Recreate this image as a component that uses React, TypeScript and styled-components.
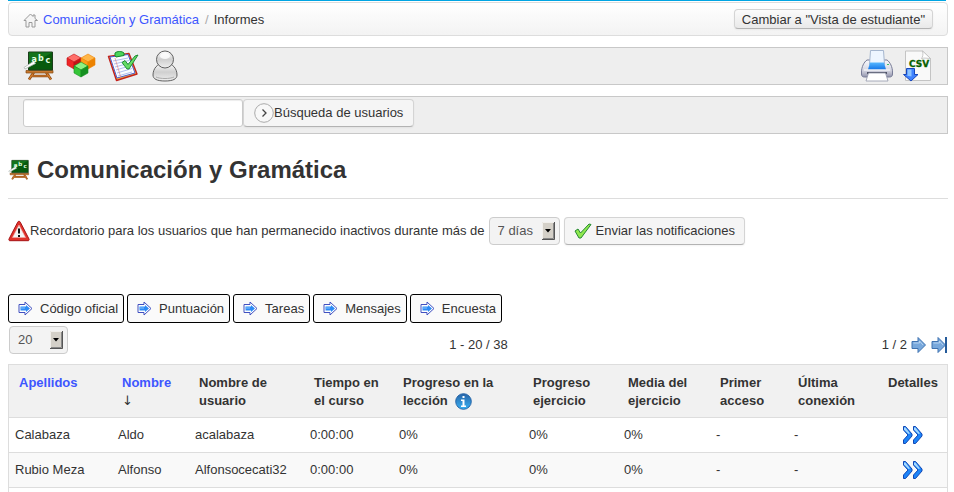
import React from "react";
import styled, { createGlobalStyle } from "styled-components";

const GlobalStyle = createGlobalStyle`
  * { box-sizing: border-box; }
  body {
    margin: 0;
    background: #fff;
    color: #333;
    font: 13px/18px "Liberation Sans", Arial, Helvetica, sans-serif;
  }
  button, input, select { font: inherit; color: inherit; margin: 0; }
  a { color: #3d56ff; text-decoration: none; }
  svg { display: block; flex: none; }
`;

const Page = styled.div`
  padding: 0 6px 0 8px;
`;

const Accent = styled.div`
  height: 1px;
  margin: 0 2px 1px 0;
  background: #00a5e3;
`;

const Breadcrumb = styled.nav`
  display: flex;
  align-items: center;
  justify-content: space-between;
  height: 34px;
  padding: 0 14px;
  border: 1px solid #ddd;
  border-radius: 4px;
  background: linear-gradient(#fff, #f3f3f3);
`;

const Trail = styled.ol`
  display: flex;
  align-items: center;
  gap: 6px;
  margin: 0;
  padding: 2px 0 0;
  list-style: none;
`;

const TrailItem = styled.li`
  display: flex;
  align-items: center;
  gap: 5px;
`;

const Slash = styled.span`
  color: #aaa;
`;

const Button = styled.button<{ $small?: boolean; $pad?: number; $gap?: number }>`
  display: inline-flex;
  align-items: center;
  gap: ${(p) => p.$gap ?? 0}px;
  height: ${(p) => (p.$small ? 20 : 28)}px;
  padding: ${(p) => (p.$small ? 1 : 0)}px ${(p) => p.$pad ?? 7}px 0;
  border: 1px solid #d4d4d4;
  border-bottom-color: #b3b3b3;
  border-radius: 4px;
  background: ${(p) => (p.$small ? "linear-gradient(#fbfbfb, #e9e9e9)" : "#f5f5f5")};
  box-shadow: 0 1px 2px rgba(0, 0, 0, 0.05);
  white-space: nowrap;
`;

const Toolbar = styled.div`
  display: flex;
  align-items: center;
  justify-content: space-between;
  height: 38px;
  margin-top: 11px;
  padding: 0 14px;
  border: 1px solid #c8c8c8;
  background: #eee;
`;

const SearchBar = styled.form`
  display: flex;
  height: 38px;
  margin-top: 11px;
  padding: 2px 14px;
  border: 1px solid #c8c8c8;
  background: #eee;
`;

const IconGroup = styled.div<{ $gap: number }>`
  display: flex;
  gap: ${(p) => p.$gap}px;
`;

const SearchInput = styled.input`
  width: 220px;
  height: 28px;
  padding: 4px 6px;
  border: 1px solid #ccc;
  border-radius: 3px;
  background: #fff;
  box-shadow: inset 0 1px 1px rgba(0, 0, 0, 0.075);
`;

const PageHeader = styled.header`
  display: flex;
  align-items: center;
  gap: 7px;
  margin: 18px 0;
  padding-bottom: 10px;
  border-bottom: 1px solid #ddd;
`;

const Title = styled.h1`
  margin: 0;
  font-size: 24px;
  line-height: 36px;
`;

const Reminder = styled.form`
  display: flex;
  align-items: center;
  gap: 4px;
`;

const ReminderLabel = styled.label`
  display: flex;
  align-items: center;
`;

const SelectBox = styled.div<{ $width: number }>`
  display: grid;
  align-items: center;
  width: ${(p) => p.$width}px;
  > * { grid-area: 1 / 1; }
  > svg { justify-self: end; margin-right: 5px; pointer-events: none; }
`;

const Select = styled.select`
  appearance: none;
  width: 100%;
  height: 28px;
  padding: 0 8px;
  border: 1px solid #ccc;
  border-radius: 4px;
  background: #f3f3f3;
  color: #555;
`;

const Tabs = styled.div`
  display: flex;
  gap: 3px;
  margin-top: 49px;
`;

const Tab = styled.button`
  display: flex;
  align-items: center;
  gap: 7px;
  height: 29px;
  padding: 0 5px 0 9px;
  border: 1px solid #000;
  border-radius: 3px;
  background: #fafafa;
  white-space: nowrap;
`;

const Pager = styled.div`
  display: grid;
  grid-template-columns: 1fr auto 1fr;
  align-items: end;
  margin: 3px 0 10px;
  padding-left: 1px;
`;

const PagerNav = styled.nav`
  display: flex;
  align-items: center;
  justify-content: flex-end;
  gap: 4px;
  padding-right: 1px;
`;

const Table = styled.table`
  width: 100%;
  table-layout: fixed;
  border: 1px solid #ddd;
  border-bottom: 0;
  border-spacing: 0;
`;

const HeadCell = styled.th`
  height: 53px;
  padding: 9px 10px 7px;
  border-bottom: 1px solid #ddd;
  background: #f1f1f1;
  text-align: left;
  vertical-align: top;
`;

const HeadLine = styled.span`
  display: flex;
  align-items: center;
  gap: 7px;
`;

const SortMark = styled.span`
  display: block;
  font-family: "DejaVu Sans", sans-serif;
  font-weight: normal;
`;

const Row = styled.tr`
  &:nth-child(even) { background: #f9f9f9; }
`;

const Cell = styled.td`
  height: 35px;
  padding: 8px 6px;
  border-bottom: 1px solid #ddd;
`;

const DetailCell = styled(Cell)`
  padding: 0;
  > a { display: flex; justify-content: center; }
`;

const FootCell = styled.td`
  height: 8px;
  padding: 0;
`;

const Board = ({ size }: { size: number }) => (
  <svg width={size} height={size} viewBox="0 0 32 32" aria-hidden="true">
    <path d="M11 22L6 29.500M23 22l5 7.500M7 26h20" stroke="#8a4a14" strokeWidth="2.600" />
    <path d="M11 22L6 29.500M23 22l5 7.500M7 26h20" stroke="#d98030" strokeWidth="1.200" />
    <path d="M3 20.500h27v2.500H3z" fill="#c87830" stroke="#84480f" strokeWidth=".7" />
    <path d="M5.500 2h24v18h-24z" fill="#075a0d" stroke="#1c3c1c" />
    <path d="M6 2.500h23L6 16z" fill="#13731b" />
    <path d="M1 17.500L11 11l1.500 2.500L2 19z" fill="#fff" stroke="#a9b4ae" strokeWidth=".8" />
    <g fill="#e4ffe4" fontFamily="DejaVu Sans" fontWeight="bold" fontSize="8">
      <text x="8.500" y="11.500">a</text><text x="15" y="10.500">b</text><text x="22.500" y="13">c</text>
    </g>
  </svg>
);

const Cube = ({ x, y, c }: { x: number; y: number; c: [string, string, string] }) => (
  <g transform={`translate(${x} ${y})`} stroke={c[2]} strokeWidth=".6" strokeLinejoin="round">
    <path d="M7 0l7 4-7 4-7-4z" fill={c[0]} />
    <path d="M0 4l7 4v7l-7-4z" fill={c[1]} />
    <path d="M14 4l-7 4v7l7-4z" fill={c[2]} />
  </g>
);

const Cubes = () => (
  <svg width="32" height="32" viewBox="0 0 32 32" aria-hidden="true">
    <Cube x={2} y={4} c={["#ff6f6a", "#ee2426", "#c41216"]} />
    <Cube x={16} y={4} c={["#ffb648", "#ff9c18", "#ec8200"]} />
    <Cube x={9} y={12} c={["#8df083", "#35c538", "#159020"]} />
  </svg>
);

const Clipboard = () => (
  <svg width="32" height="32" viewBox="0 0 32 32" aria-hidden="true">
    <path d="M1.500 6.500L22 3.500l8 20.500L9.500 30.500z" fill="#f4b43a" stroke="#c3221d" strokeWidth="1.400" strokeLinejoin="round" />
    <path d="M3 7L21 4.500l7 18.500-18 5z" fill="#fafcff" stroke="#4b5cd0" />
    <path d="M6 11l15-3M7 14l15-3.500M8 17l15-4M9 20l15-4.500M10 23l15-4.500M11 26l14-4" stroke="#9bafe8" strokeWidth=".8" />
    <path d="M8 8l6 20" stroke="#e28989" strokeWidth=".7" />
    <path d="M8 5.500V3C10 1 15 1 17 3v2.500l-8 1.500z" fill="#4bd55b" stroke="#14892a" />
    <path d="M15 12.500l3-2 3 4L28 6l3-1-9 14h-2z" fill="#65dc65" stroke="#13822a" strokeWidth=".9" />
  </svg>
);

const Person = () => (
  <svg width="32" height="32" viewBox="0 0 32 32" aria-hidden="true">
    <defs>
      <linearGradient id="personFill" x2="0" y2="1">
        <stop stopColor="#fff" /><stop offset=".5" stopColor="#cfcfcf" /><stop offset="1" stopColor="#eee" />
      </linearGradient>
    </defs>
    <path d="M16 13c8 0 12 6 12 12 0 4-4 6-12 6S4 29 4 25c0-6 4-12 12-12z" fill="url(#personFill)" stroke="#606060" />
    <path d="M7 27c4 2 14 2 18 0" stroke="#aaa" fill="none" />
    <circle cx="16" cy="9.500" r="8.500" fill="url(#personFill)" stroke="#606060" />
    <ellipse cx="16" cy="6" rx="5" ry="3" fill="#fff" opacity=".8" />
  </svg>
);

const Printer = () => (
  <svg width="32" height="32" viewBox="0 0 32 32" aria-hidden="true">
    <defs>
      <linearGradient id="paperBlue" x2="0" y2="1"><stop stopColor="#56b7ff" /><stop offset="1" stopColor="#1475e8" /></linearGradient>
      <linearGradient id="printerBody" x2="0" y2="1"><stop stopColor="#f9f9fc" /><stop offset=".6" stopColor="#d6d7e2" /><stop offset="1" stopColor="#9294ac" /></linearGradient>
    </defs>
    <path d="M6 10h20c3 2 5.500 7 5.500 12v2c0 2-1 3-3 3h-25c-2 0-3-1-3-3v-2c0-5 2.500-10 5.500-12z" fill="url(#printerBody)" stroke="#777b96" />
    <path d="M9.500.5h13l1 14h-15z" fill="#edf5ff" stroke="#a5b6cf" />
    <path d="M9 12.500h14l2 7H7z" fill="url(#paperBlue)" />
    <path d="M3 20h26" stroke="#fff" />
    <path d="M6 23h20" stroke="#505468" strokeWidth="2" />
    <path d="M7.500 23h17l2.500 8H5z" fill="#fff" stroke="#9297aa" strokeWidth=".8" />
    <path d="M26 14.500h2" stroke="#40be67" />
  </svg>
);

const CsvFile = () => (
  <svg width="32" height="32" viewBox="0 0 32 32" aria-hidden="true">
    <path d="M4.500 1h17L29.500 8.500V30.500h-25z" fill="#f9f9f9" stroke="#c4c4c4" />
    <path d="M21.500 1c1 4 0 6-1 7.500 3-1 6 0 9 0z" fill="#fff" stroke="#bbb" strokeWidth=".8" />
    <text x="8" y="17" fill="#086000" stroke="#086000" strokeWidth=".3" fontFamily="DejaVu Sans" fontSize="9" fontWeight="bold">CSV</text>
    <path d="M5.500 18.500h8v6h3.500L10 31l-7.500-6.500h3z" fill="#3f82ff" stroke="#1747bb" />
    <path d="M6.500 19.500h4v7L5 25.500h1.500z" fill="#8dc4ff" />
  </svg>
);

const House = () => (
  <svg width="15" height="15" viewBox="0 0 15 15" aria-hidden="true">
    <path d="M1 7.500L7.500 1l2.500 2.500V2h2v3.500l2.500 2H12V14H9V9.500H6V14H3V7.500z" fill="#f5f5f5" stroke="#999" strokeLinejoin="round" />
  </svg>
);

const Go = () => (
  <svg width="20" height="20" viewBox="0 0 20 20" aria-hidden="true">
    <circle cx="10" cy="10" r="9.300" fill="#f8f8f8" stroke="#aaa" />
    <path d="M8.500 6.500L12 10l-3.500 3.500" fill="none" stroke="#444" strokeWidth="1.300" />
  </svg>
);

const Warning = () => (
  <svg width="22" height="22" viewBox="0 0 22 22" aria-hidden="true">
    <path d="M11 1.200c.6 0 1 .4 1.300 1L21 19c.4 1 0 1.700-1 1.700H2c-1 0-1.400-.7-1-1.700L9.700 2.200c.3-.6.700-1 1.300-1z" fill="#e0332c" stroke="#a71316" />
    <path d="M11 5L17.500 17.500h-13z" fill="#f4f4f4" stroke="#f2aaa4" strokeWidth=".6" />
    <path d="M11 8.500v5M11 15v2" stroke="#111" strokeWidth="2" />
  </svg>
);

const Check = () => (
  <svg width="18" height="18" viewBox="0 0 18 18" aria-hidden="true">
    <path d="M1 9l3-2 2.500 4L15 2l2 .5L7 16H5z" fill="#8fe84e" stroke="#258832" strokeLinejoin="round" />
  </svg>
);

const DropArrow = () => (
  <svg width="13" height="18" viewBox="0 0 13 18" aria-hidden="true">
    <path d="M0 0h13v18H0z" fill="#d4d0c8" />
    <path d="M.5 17V.5H12" fill="none" stroke="#f1efeb" />
    <path d="M12.500 0v17.500H0" fill="none" stroke="#555" />
    <path d="M11.500 1v15.500H1" fill="none" stroke="#888" />
    <path d="M3 7h6L6 10.500z" fill="#000" />
  </svg>
);

const TabArrow = () => (
  <svg width="15" height="15" viewBox="0 0 15 15" aria-hidden="true">
    <path d="M1 3.500h6V1l7 6.500L7 14v-2.500H1z" fill="#fff" stroke="#4050c0" />
    <path d="M2.500 5.500H8V4l4 3.500L8 11V9.500H2.500z" fill="#2d8bf5" />
    <path d="M2 7h5" stroke="#84c4ff" />
  </svg>
);

const NextArrow = ({ last }: { last?: boolean }) => (
  <svg width="16" height="16" viewBox="0 0 16 16" aria-hidden="true">
    <path d="M1 4.500h6v-4l7.500 7.500L7 15.500v-4H1z" fill="#78a8dc" stroke="#3f72b0" />
    <path d="M2.500 6h6V4l3.500 4" fill="none" stroke="#b7d3f1" />
    {last && <path d="M15 0v16" stroke="#255b9a" strokeWidth="2" />}
  </svg>
);

const Info = () => (
  <svg width="17" height="17" viewBox="0 0 17 17" aria-hidden="true">
    <defs><linearGradient id="infoFill" x2="0" y2="1"><stop stopColor="#2864a8" /><stop offset="1" stopColor="#38b2f5" /></linearGradient></defs>
    <circle cx="8.500" cy="8.500" r="7.800" fill="url(#infoFill)" stroke="#2766a8" />
    <path d="M7.500 3h2v2h-2zM6 6.500h3.500v6H11V14H6v-1.500h1.500V8H6z" fill="#fff" />
  </svg>
);

const Chevrons = () => (
  <svg width="22" height="20" viewBox="0 0 22 20" aria-hidden="true">
    {[0, 10].map((x) => (
      <g key={x} transform={`translate(${x} 0)`}>
        <path d="M1.500 1.500h2L10 9v2l-6.500 7.500h-2V15l4.500-5-4.500-5z" fill="#1c84f8" stroke="#1147b5" strokeLinejoin="round" />
        <path d="M2 2.500h1.500l4.500 6-1.500.5L2 4.500z" fill="#a4d9ff" />
      </g>
    ))}
  </svg>
);

const widths = [103, 77, 115, 89, 130, 95, 92, 78, 90, 69];
const tabs = ["Código oficial", "Puntuación", "Tareas", "Mensajes", "Encuesta"];
const users = [
  ["Calabaza", "Aldo", "acalabaza", "0:00:00", "0%", "0%", "0%", "-", "-"],
  ["Rubio Meza", "Alfonso", "Alfonsocecati32", "0:00:00", "0%", "0%", "0%", "-", "-"],
];

export default function App() {
  return (
    <Page>
      <GlobalStyle />
      <Accent />
      <Breadcrumb aria-label="Ruta">
        <Trail>
          <TrailItem><House /><a href="#curso">Comunicación y Gramática</a></TrailItem>
          <TrailItem><Slash>/</Slash>Informes</TrailItem>
        </Trail>
        <Button type="button" $small>Cambiar a "Vista de estudiante"</Button>
      </Breadcrumb>

      <Toolbar>
        <IconGroup $gap={10}>
          <a href="#informes" aria-label="Informes"><Board size={32} /></a>
          <a href="#lecciones" aria-label="Lecciones"><Cubes /></a>
          <a href="#ejercicios" aria-label="Ejercicios"><Clipboard /></a>
          <a href="#usuarios" aria-label="Usuarios"><Person /></a>
        </IconGroup>
        <IconGroup $gap={8}>
          <a href="#imprimir" aria-label="Imprimir"><Printer /></a>
          <a href="#csv" aria-label="Exportar CSV"><CsvFile /></a>
        </IconGroup>
      </Toolbar>

      <SearchBar onSubmit={(e) => e.preventDefault()}>
        <SearchInput type="text" aria-label="Búsqueda de usuarios" />
        <Button type="submit" $pad={10}><Go />Búsqueda de usuarios</Button>
      </SearchBar>

      <PageHeader>
        <Board size={22} />
        <Title>Comunicación y Gramática</Title>
      </PageHeader>

      <Reminder onSubmit={(e) => e.preventDefault()}>
        <ReminderLabel htmlFor="days">
          <Warning />Recordatorio para los usuarios que han permanecido inactivos durante más de
        </ReminderLabel>
        <SelectBox $width={71}>
          <Select id="days"><option>7 días</option></Select>
          <DropArrow />
        </SelectBox>
        <Button type="submit" $pad={9} $gap={4}><Check />Enviar las notificaciones</Button>
      </Reminder>

      <Tabs>
        {tabs.map((t) => <Tab type="button" key={t}><TabArrow />{t}</Tab>)}
      </Tabs>

      <Pager>
        <SelectBox $width={59}>
          <Select aria-label="Filas por página"><option>20</option></Select>
          <DropArrow />
        </SelectBox>
        <span>1 - 20 / 38</span>
        <PagerNav aria-label="Páginas">
          1 / 2
          <a href="#siguiente" aria-label="Siguiente"><NextArrow /></a>
          <a href="#ultima" aria-label="Última"><NextArrow last /></a>
        </PagerNav>
      </Pager>

      <Table>
        <colgroup>{widths.map((w, i) => <col key={i} width={w} />)}</colgroup>
        <thead>
          <tr>
            <HeadCell><a href="#apellidos">Apellidos</a></HeadCell>
            <HeadCell><a href="#nombre">Nombre</a><SortMark>↓</SortMark></HeadCell>
            <HeadCell>Nombre de usuario</HeadCell>
            <HeadCell>Tiempo en el curso</HeadCell>
            <HeadCell>Progreso en la <HeadLine>lección <Info /></HeadLine></HeadCell>
            <HeadCell>Progreso ejercicio</HeadCell>
            <HeadCell>Media del ejercicio</HeadCell>
            <HeadCell>Primer acceso</HeadCell>
            <HeadCell>Última conexión</HeadCell>
            <HeadCell>Detalles</HeadCell>
          </tr>
        </thead>
        <tbody>
          {users.map((u) => (
            <Row key={u[2]}>
              {u.map((v, i) => <Cell key={i}>{v}</Cell>)}
              <DetailCell><a href={`#${u[2]}`} aria-label={`Detalles de ${u[1]}`}><Chevrons /></a></DetailCell>
            </Row>
          ))}
        </tbody>
        <tfoot>
          <tr><FootCell colSpan={10} /></tr>
        </tfoot>
      </Table>
    </Page>
  );
}
